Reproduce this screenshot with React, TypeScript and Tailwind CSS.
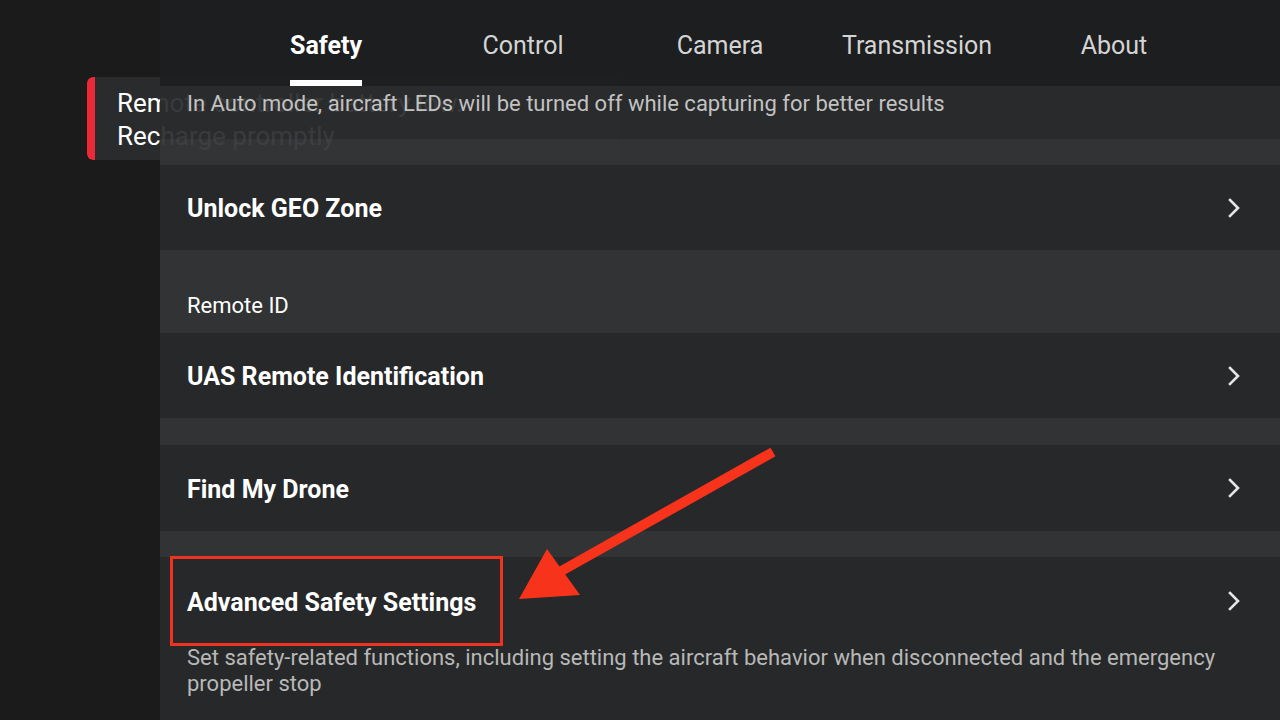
import React from 'react';

const tabs = ['Safety', 'Control', 'Camera', 'Transmission', 'About'];

const Chevron: React.FC = () => (
  <svg width="16" height="22" viewBox="0 0 16 22" className="shrink-0">
    <polyline points="4,3 12,11 4,19" fill="none" stroke="#e6e6e6" strokeWidth="2.6" strokeLinecap="square" />
  </svg>
);

const NavRow: React.FC<{ title: string; h: string }> = ({ title, h }) => (
  <div className={`${h} bg-[#28292a]/95 flex items-center justify-between pl-[27px] pr-[38px]`}>
    <span className="text-[25px] font-bold text-white leading-[30px] pt-[3px]">{title}</span>
    <Chevron />
  </div>
);

const Gap: React.FC<{ h: string }> = ({ h }) => <div className={`${h} bg-[#333537]/95`} />;

export default function App() {
  return (
    <div
      className="relative w-[1280px] h-[720px] overflow-hidden bg-[#1b1b1c] flex"
      style={{ fontFamily: 'Roboto, "Noto Sans", sans-serif' }}
    >
      {/* toast, half hidden behind the settings panel */}
      <div className="absolute left-[87px] top-[77px] w-[533px] h-[83px] z-0 flex rounded-l-[6px] overflow-hidden bg-[#2a2b2c]">
        <div className="w-[8px] bg-[#ec2a37] rounded-l-[6px]" />
        <div className="pl-[22px] pt-[10px] text-[26px] leading-[33px] text-white">
          <div>Remote controller battery low.</div>
          <div>Recharge promptly</div>
        </div>
      </div>

      <div className="w-[160px] shrink-0" />

      <div className="relative z-10 flex-1 flex flex-col">
        <div className="h-[86px] shrink-0 bg-[#1e1f20]/[0.97] flex justify-center">
          {tabs.map((t, i) => (
            <div key={t} className="w-[197px] flex flex-col items-center">
              <div className="relative pt-[30px] h-[86px] flex flex-col items-center">
                <span
                  className={
                    i === 0
                      ? 'text-[25px] leading-[32px] font-bold text-white'
                      : 'text-[25px] leading-[32px] text-[#d4d4d4]'
                  }
                >
                  {t}
                </span>
                {i === 0 && <div className="absolute bottom-0 left-0 right-0 h-[6px] bg-white" />}
              </div>
            </div>
          ))}
        </div>

        <div className="h-[53px] shrink-0 bg-[#2a2b2c]/[0.93] pl-[27px] pt-[4px]">
          <span className="text-[22px] leading-[28px] text-[#c2c2c2]">
            In Auto mode, aircraft LEDs will be turned off while capturing for better results
          </span>
        </div>
        <Gap h="h-[26px] shrink-0" />
        <NavRow title="Unlock GEO Zone" h="h-[85px] shrink-0" />
        <div className="h-[83px] shrink-0 bg-[#333537]/95 flex items-end pl-[27px] pb-[13px]">
          <span className="text-[22px] leading-[28px] text-white">Remote ID</span>
        </div>
        <NavRow title="UAS Remote Identification" h="h-[85px] shrink-0" />
        <Gap h="h-[27px] shrink-0" />
        <NavRow title="Find My Drone" h="h-[86px] shrink-0" />
        <Gap h="h-[26px] shrink-0" />

        <div className="flex-1 bg-[#28292a]/95">
          <div className="relative h-[88px] flex items-center justify-between pl-[27px] pr-[38px]">
            <span className="text-[25px] font-bold text-white leading-[30px] pt-[3px]">Advanced Safety Settings</span>
            <Chevron />
            <div className="absolute left-[10px] top-[-1px] w-[333px] h-[90px] border-[3px] border-[#ee3420]" />
          </div>
          <p className="pl-[27px] pr-[40px] text-[22px] leading-[26px] text-[#b8b8b8]">
            Set safety-related functions, including setting the aircraft behavior when disconnected and the emergency
            propeller stop
          </p>
        </div>
      </div>

      {/* annotation arrow */}
      <svg className="absolute inset-0 z-20 pointer-events-none" width="1280" height="720" viewBox="0 0 1280 720">
        <line x1="773" y1="452" x2="556" y2="574" stroke="#f8331c" strokeWidth="10" />
        <polygon points="519,599 547,549 580,595" fill="#f8331c" />
      </svg>
    </div>
  );
}
